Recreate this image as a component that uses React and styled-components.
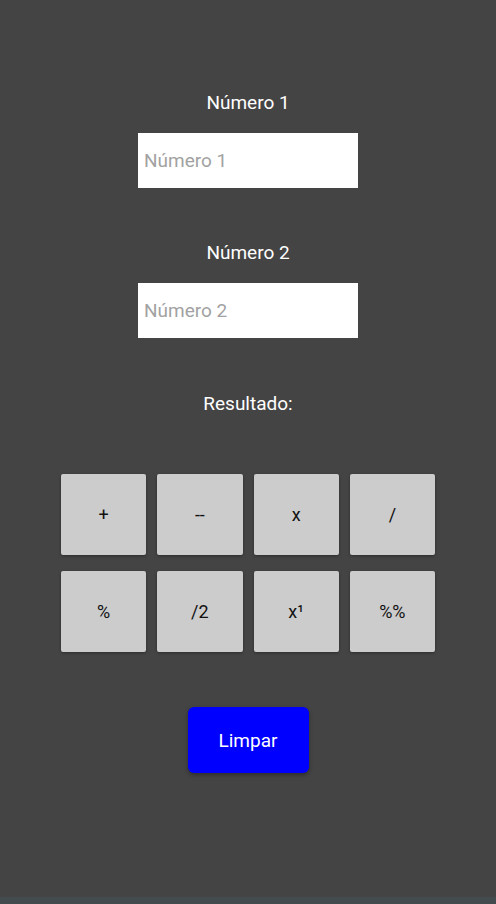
import React, { useState } from 'react';
import styled, { createGlobalStyle } from 'styled-components';

// - Global -
const GlobalStyle = createGlobalStyle`
  html, body {
    margin: 0;
    padding: 0;
    background: #444444;
  }
  * { box-sizing: border-box; }
`;

// - Styled Components -

// Whole screen: dark background, content in a centered column.
const Screen = styled.div`
  min-height: 904px;
  display: flex;
  flex-direction: column;
  background: #444444;
  font-family: Roboto, "Noto Sans", sans-serif;
`;

const Content = styled.main`
  flex: 1;
  display: flex;
  flex-direction: column;
  align-items: center;
  padding-top: 91px;
`;

// Field label above each input.
const Label = styled.div`
  height: 24px;
  line-height: 24px;
  font-size: 19px;
  color: #ffffff;
  margin-top: ${props => props.top || '0px'};
`;

const Input = styled.input`
  width: 220px;
  height: 55px;
  margin-top: 18px;
  border: none;
  outline: none;
  background: #ffffff;
  padding: 0 6px;
  font-family: inherit;
  font-size: 19px;
  color: #222;
  &::placeholder {
    color: #a2a2a2;
  }
`;

// 4 x 2 grid of operation buttons.
const Keypad = styled.div`
  width: 374px;
  display: grid;
  grid-template-columns: repeat(4, 1fr);
  grid-auto-rows: 81px;
  column-gap: 11px;
  row-gap: 16px;
  margin-top: 58px;
`;

const Key = styled.button`
  border: none;
  border-radius: 2px;
  background: #cccccc;
  color: #111111;
  font-family: inherit;
  font-size: 18px;
  box-shadow: 0 1px 3px rgba(0, 0, 0, 0.35);
  cursor: pointer;
`;

const ClearButton = styled.button`
  width: 121px;
  height: 66px;
  margin-top: 55px;
  border: none;
  border-radius: 6px;
  background: #0000ff;
  color: #ffffff;
  font-family: inherit;
  font-size: 19px;
  box-shadow: 0 2px 4px rgba(0, 0, 0, 0.35);
  cursor: pointer;
`;

// Thin navigation strip at the very bottom.
const NavStrip = styled.div`
  height: 7px;
  background: #434b4f;
`;

const keys = ['+', '--', 'x', '/', '%', '/2', 'x¹', '%%'];

const App = () => {
  const [a, setA] = useState('');
  const [b, setB] = useState('');

  return (
    <Screen>
      <GlobalStyle />
      <Content>
        <Label>Número 1</Label>
        <Input placeholder="Número 1" value={a} onChange={e => setA(e.target.value)} />
        <Label top="53px">Número 2</Label>
        <Input placeholder="Número 2" value={b} onChange={e => setB(e.target.value)} />
        <Label top="54px">Resultado:</Label>
        <Keypad>
          {keys.map(k => (
            <Key key={k}>{k}</Key>
          ))}
        </Keypad>
        <ClearButton onClick={() => { setA(''); setB(''); }}>Limpar</ClearButton>
      </Content>
      <NavStrip />
    </Screen>
  );
};

export default App;
